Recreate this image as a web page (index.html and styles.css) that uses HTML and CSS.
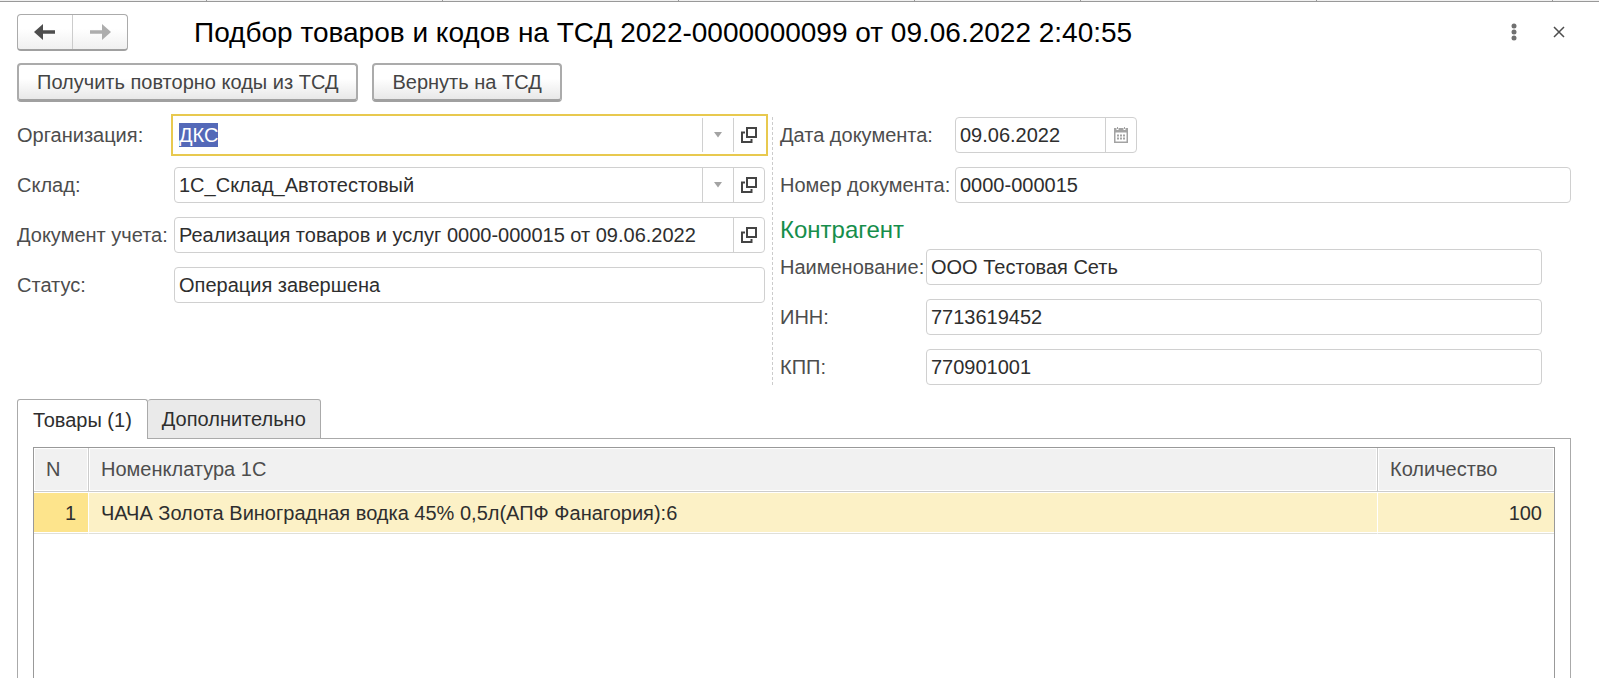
FILE: index.html
```html
<!DOCTYPE html>
<html lang="ru">
<head>
<meta charset="utf-8">
<title>Подбор товаров и кодов на ТСД</title>
<link rel="stylesheet" href="styles.css">
</head>
<body>
<svg class="sprite" aria-hidden="true">
  <symbol id="open" viewBox="0 0 16 16">
    <path d="M6 1h9v9h-9z M4 5.500H1V15h9.500V12" fill="none" stroke="#444" stroke-width="2"/>
  </symbol>
  <symbol id="caret" viewBox="0 0 8 6"><path d="M0 0h8L4 5.500z" fill="#a3a3a3"/></symbol>
</svg>
<div class="window-tabs"><i></i><i></i><i></i><i></i><i class="short"></i><i></i><i></i></div>
<main class="form">
  <header class="head">
    <div class="nav">
      <button type="button" aria-label="Назад"><svg width="22" height="18" viewBox="0 0 22 18"><path d="M0 9L9 1V7.300H21V10.700H9V17z" fill="#4d4d4d"/></svg></button>
      <button type="button" aria-label="Вперед"><svg width="22" height="18" viewBox="0 0 22 18"><path d="M22 9L13 1V7.300H1V10.700H13V17z" fill="#adadad"/></svg></button>
    </div>
    <h1>Подбор товаров и кодов на ТСД 2022-0000000099 от 09.06.2022 2:40:55</h1>
    <div class="tools">
      <button type="button" aria-label="Еще"><svg width="6" height="18" viewBox="0 0 6 18"><g fill="#707070"><circle cx="3" cy="3" r="2.500"/><circle cx="3" cy="9" r="2.500"/><circle cx="3" cy="15" r="2.500"/></g></svg></button>
      <button type="button" aria-label="Закрыть"><svg width="12" height="12" viewBox="0 0 12 12"><path d="M1 1L11 11M11 1L1 11" stroke="#4d4d4d" stroke-width="1.500"/></svg></button>
    </div>
  </header>
  <div class="commands">
    <button type="button">Получить повторно коды из ТСД</button>
    <button type="button">Вернуть на ТСД</button>
  </div>
  <div class="columns">
    <section class="left">
      <label for="org">Организация:</label>
      <div class="field focused"><span class="value"><input id="org" value="ДКС"></span><button type="button" aria-label="Выбрать"><svg width="8" height="6"><use href="#caret"/></svg></button><button type="button" aria-label="Открыть"><svg width="16" height="16"><use href="#open"/></svg></button></div>
      <label for="store">Склад:</label>
      <div class="field"><input id="store" value="1С_Склад_Автотестовый"><button type="button" aria-label="Выбрать"><svg width="8" height="6"><use href="#caret"/></svg></button><button type="button" aria-label="Открыть"><svg width="16" height="16"><use href="#open"/></svg></button></div>
      <label for="doc">Документ учета:</label>
      <div class="field"><input id="doc" value="Реализация товаров и услуг 0000-000015 от 09.06.2022"><button type="button" aria-label="Открыть"><svg width="16" height="16"><use href="#open"/></svg></button></div>
      <label for="status">Статус:</label>
      <div class="field"><input id="status" value="Операция завершена"></div>
    </section>
    <section class="right">
      <div class="document">
        <label for="date">Дата документа:</label>
        <div class="field date"><input id="date" value="09.06.2022"><button type="button" aria-label="Календарь"><svg width="14" height="16" viewBox="0 0 14 16"><path fill="#a3a3a3" fill-rule="evenodd" d="M0 1h2.500v2h2V1h5v2h2V1H14v15H0zM1.500 5.500v9h11v-9z"/><path d="M3 0h1v2H3zM10 0h1v2h-1z" fill="#a3a3a3"/><path d="M3 8.500h8M3 11.500h8" stroke="#a3a3a3" stroke-width="2" stroke-dasharray="2 1"/></svg></button></div>
        <label for="number">Номер документа:</label>
        <div class="field"><input id="number" value="0000-000015"></div>
      </div>
      <h2>Контрагент</h2>
      <div class="partner">
        <label for="name">Наименование:</label>
        <div class="field"><input id="name" value="ООО Тестовая Сеть"></div>
        <label for="inn">ИНН:</label>
        <div class="field"><input id="inn" value="7713619452"></div>
        <label for="kpp">КПП:</label>
        <div class="field"><input id="kpp" value="770901001"></div>
      </div>
    </section>
  </div>
  <div class="tabs" role="tablist">
    <button type="button" role="tab" aria-selected="true">Товары (1)</button>
    <button type="button" role="tab" aria-selected="false">Дополнительно</button>
  </div>
  <div class="pane">
    <div class="grid">
      <table>
        <thead><tr><th class="n">N</th><th>Номенклатура 1С</th><th class="qty">Количество</th></tr></thead>
        <tbody><tr><td class="n">1</td><td>ЧАЧА Золота Виноградная водка 45% 0,5л(АПФ Фанагория):6</td><td class="qty">100</td></tr></tbody>
      </table>
    </div>
  </div>
</main>
</body>
</html>
```
FILE: styles.css
```css
* { box-sizing: border-box; }
body {
  margin: 0;
  height: 100vh;
  overflow: hidden;
  display: flex;
  flex-direction: column;
  background: #fff;
  color: #2e2e2e;
  font: 20px/24px "Liberation Sans", Arial, sans-serif;
}
button, input { font: inherit; color: inherit; margin: 0; }
button { cursor: pointer; }
svg { display: block; }
.sprite { position: absolute; width: 0; height: 0; }

.window-tabs {
  display: flex;
  height: 2px;
  background: #f0f0f0;
  border-bottom: 1px solid #999;
}
.window-tabs i { flex: 0 0 236px; border-right: 1px solid #999; }
.window-tabs i:first-child { flex-basis: 207px; }
.window-tabs .short { flex-basis: 166px; }

.form {
  flex: 1;
  min-height: 0;
  display: flex;
  flex-direction: column;
  padding: 12px 28px 0 17px;
}
.head { display: flex; align-items: center; height: 37px; }
.nav {
  display: flex;
  width: 111px;
  height: 37px;
  border: 1px solid #ababab;
  border-bottom: 2px solid #a0a0a0;
  border-radius: 4px;
  background: linear-gradient(#fff 40%, #f0f0f0);
}
.nav button {
  flex: 1;
  display: flex;
  align-items: center;
  justify-content: center;
  padding: 0;
  border: 0;
  background: none;
}
.nav button + button { border-left: 1px solid #ccc; }
h1 {
  flex: 1;
  margin: 0 0 0 66px;
  font-size: 28px;
  line-height: 36px;
  font-weight: 400;
  color: #000;
  white-space: nowrap;
}
.tools { display: flex; gap: 36px; align-items: center; padding: 0 6px 2px 0; }
.tools button { padding: 0; border: 0; background: none; }

.commands { display: flex; gap: 14px; margin-top: 12px; }
.commands button {
  height: 39px;
  padding: 0 18px;
  border: 2px solid #ababab;
  border-bottom: 3px solid #a0a0a0;
  border-radius: 4px;
  background: linear-gradient(#fff 40%, #e8e8e8);
  color: #444;
}

.columns { display: flex; margin-top: 15px; }
.left {
  flex: 0 0 756px;
  display: grid;
  grid-template-columns: 157px 1fr;
  row-gap: 14px;
  align-content: start;
  padding-right: 7px;
  border-right: 1px dashed #ccc;
}
.right { flex: 1; padding-left: 7px; }
.document, .partner {
  display: grid;
  grid-template-columns: 175px 1fr;
  row-gap: 14px;
}
.partner { grid-template-columns: 146px 1fr; padding-right: 29px; }
label { color: #4d4d4d; line-height: 36px; white-space: nowrap; }
.field {
  display: flex;
  height: 36px;
  min-width: 0;
  border: 1px solid #d0d0d0;
  border-radius: 4px;
  background: #fff;
}
.field input {
  flex: 1;
  min-width: 0;
  width: 100%;
  padding: 0 4px;
  border: 0;
  outline: 0;
  background: none;
}
.field button {
  flex: 0 0 31px;
  display: flex;
  align-items: center;
  justify-content: center;
  padding: 0;
  border: 0;
  border-left: 1px solid #d0d0d0;
  background: none;
}
.value { flex: 1; display: flex; align-items: center; padding-left: 4px; }
.field .value input {
  flex: 0 0 auto;
  width: auto;
  field-sizing: content;
  padding: 0;
  background: #5469b8;
  color: #fff;
}
.focused { border-color: transparent; border-radius: 0; outline: 2px solid #e8c94f; outline-offset: 1px; }
.date { width: 182px; }
h2 {
  margin: 12px 0 4px;
  font-size: 24px;
  line-height: 30px;
  font-weight: 400;
  color: #168e4b;
}

.tabs {
  display: flex;
  position: relative;
  z-index: 1;
  margin: 14px 0 -1px;
}
.tabs button {
  height: 40px;
  padding: 0 14px;
  border: 1px solid #aaa;
  border-radius: 3px 3px 0 0;
  background: #eaeaea;
}
.tabs button + button { border-left: 0; }
.tabs [aria-selected="true"] { padding: 0 15px; background: #fff; border-bottom: 0; }
.pane {
  flex: 1;
  display: flex;
  border: 1px solid #aaa;
  border-bottom: 0;
  padding: 8px 15px 0;
}
.grid { flex: 1; border: 1px solid #999; border-bottom: 0; }
table { width: 100%; border-collapse: separate; border-spacing: 0; table-layout: fixed; }
th, td { padding: 0 12px; text-align: left; font-weight: 400; white-space: nowrap; }
th {
  height: 44px;
  padding-bottom: 2px;
  border-right: 1px solid #ccc;
  border-bottom: 1px solid #ccc;
  background: #f1f1f1;
  box-shadow: inset 0 0 0 1px #fff;
  color: #4d4d4d;
}
td {
  height: 42px;
  border-bottom: 1px solid #e0e0d8;
  border-right: 1px solid #fff;
  background: #fcf1c6;
  box-shadow: inset 0 1px #fff, inset 0 -1px #fff;
}
th:last-child, td:last-child { border-right: 0; }
.n { width: 55px; }
.qty { width: 176px; }
td.n { background: #fde48c; text-align: right; }
td.qty { text-align: right; }
```
